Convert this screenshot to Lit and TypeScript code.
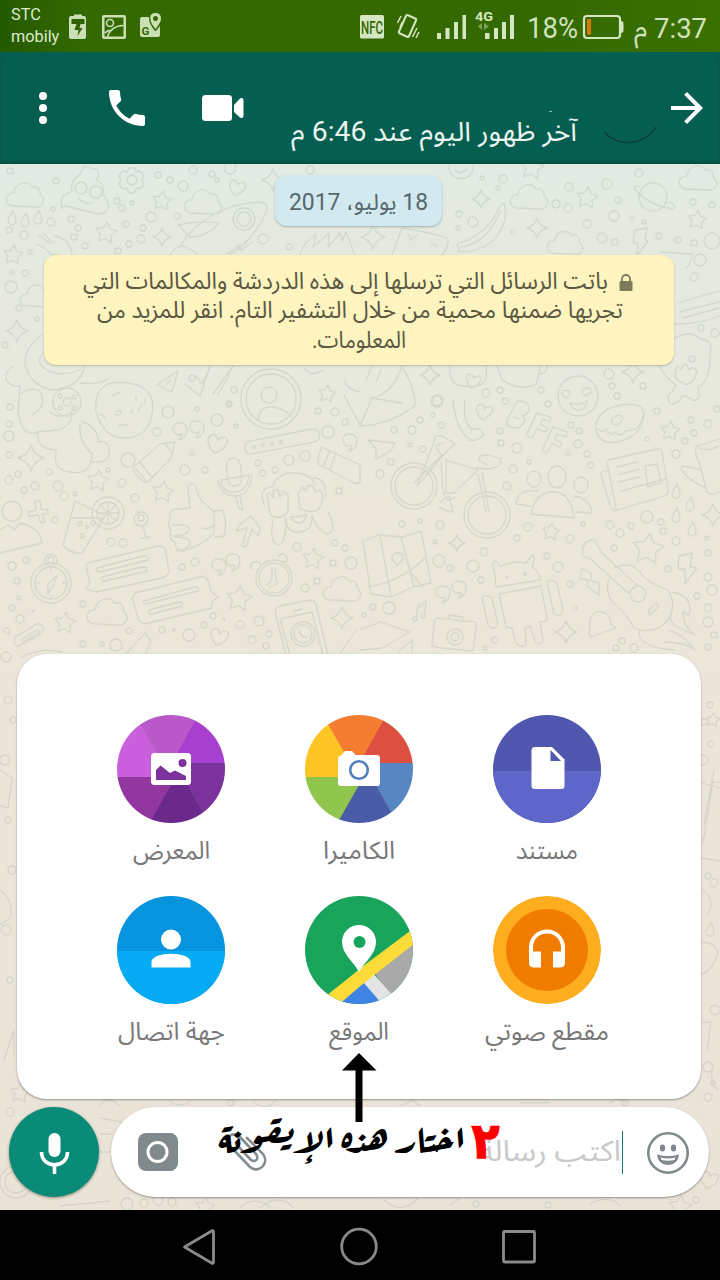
import { LitElement, html, svg, css } from "lit";
import { customElement } from "lit/decorators.js";

const ARABIC = '"Roboto", "Noto Sans Arabic", "Noto Sans", "Noto Naskh Arabic", "DejaVu Sans", sans-serif';

interface Line {
  text: string;
  w: number;
  h: number;
  base: number;
  size: number;
  fill: string;
  ltr?: boolean;
}

const line = (l: Line) => html`<svg class="line" width=${l.w} height=${l.h} viewBox="0 0 ${l.w} ${l.h}">
  <text x=${l.w / 2} y=${l.base} font-family=${ARABIC} font-size=${l.size} fill=${l.fill}
    text-anchor="middle" direction=${l.ltr ? "ltr" : "rtl"} textLength=${l.w} lengthAdjust="spacingAndGlyphs">${l.text}</text>
</svg>`;

/* ---- wallpaper doodles ---- */

const dots = `10,171,3 56,181,3 158,175,3 170,180,3 193,170,4 183,186,5 212,174,3 217,180,2 230,168,6 53,209,2 51,222,4 71,219,3 78,228,3
117,201,3 122,208,3 132,203,2 126,224,3 151,217,5 177,216,3 143,228,3 141,239,4 129,244,3 118,251,3 85,246,3 74,237,3 9,230,3 24,235,4
30,252,2 12,272,2 25,273,3 11,287,6 263,239,5 289,247,3 19,308,3 5,345,3 37,319,2 310,170,4 192,378,3 234,390,3 229,404,3
482,178,2 503,179,4 498,188,2 459,214,3 473,222,5 458,228,2 513,232,2 569,187,4 607,184,5 556,204,4 568,208,4 618,200,3 614,216,5
587,224,4 602,238,5 615,242,3 632,218,2 644,222,2 659,236,3 678,240,3 693,202,3 712,205,3 694,243,3 712,241,8 700,260,6 694,277,4
701,328,3 715,333,4 609,374,5 612,386,3 643,386,3 617,396,3 486,393,4 500,390,3 541,390,3 437,401,5 505,401,3 548,404,3 639,173,4
10,407,3 9,424,3 9,436,5 9,455,3 18,474,3 9,480,4 49,472,3 24,490,3 35,486,4 58,486,5 64,496,4 75,494,2 108,470,2 122,483,4 128,460,7
168,412,6 157,432,4 197,409,2 217,420,6 236,426,2 192,454,2 185,470,5 205,470,3 135,498,4 229,404,2 318,411,3 335,412,4 328,432,6
345,422,3 258,463,3 263,473,3 275,470,3 289,460,5 305,456,5 339,491,3 55,520,3 111,542,4 123,543,4 182,567,3 195,562,4 141,518,3
297,547,4 335,543,3 345,548,3 351,563,6 333,563,3 305,588,4 317,581,3 12,566,4 26,560,3 17,581,3 19,598,2 12,608,3 33,611,1 20,619,4
7,631,3 6,657,5 83,604,3 83,644,3 102,644,2 116,645,6 129,631,3 162,630,3 174,630,1 189,635,6 204,625,3 213,616,3 224,619,1 240,625,4
259,621,5 252,640,4 269,634,3 266,646,3 437,401,6 394,430,3 412,430,4 420,420,3 441,425,3 433,415,2 410,445,2 423,449,3 380,474,4
391,462,3 500,431,3 501,443,3 517,448,5 513,469,4 529,462,2 507,486,4 571,425,3 579,431,3 578,444,4 568,454,2 587,454,3 591,465,3
657,411,3 647,439,2 691,420,3 708,424,4 694,433,3 685,441,3 676,454,4 717,409,3 402,524,3 420,521,2 440,525,4 435,542,2 484,552,4
528,527,4 517,538,3 583,524,2 570,539,4 610,525,4 631,526,3 620,533,4 647,517,6 661,522,3 663,531,3 614,548,3 676,541,4 707,538,2
708,553,3 439,561,6 450,568,3 473,566,6 547,556,3 558,567,5 481,580,3 570,584,3 668,569,3 708,577,4 712,590,5 697,596,3 708,608,4
708,622,5 714,635,3 708,647,3 389,608,6 373,607,3 364,615,2 575,608,2 495,640,3 485,648,2 622,641,3 616,648,3 634,648,4 710,705,3
704,722,3 711,744,3 703,760,5 708,876,3 714,883,4 715,1010,5 708,1067,5 713,1083,2 708,1097,4 10,1112,4 8,700,4 13,720,3 5,760,5 8,820,3
12,870,4 6,930,5 10,980,3 127,1204,6 144,1203,4 158,1200,5 172,1202,4 476,1204,3 548,1205,3 696,1200,3 231,1103,3 625,1103,3`
  .split(/\s+/)
  .map((t) => t.split(",").map(Number));

const stars = [
  [106, 233, 11], [162, 201, 10], [13, 255, 10], [327, 394, 9], [532, 168, 12], [587, 198, 11], [697, 220, 10],
  [98, 481, 11], [163, 492, 11], [313, 559, 11], [239, 599, 13], [65, 623, 11], [670, 431, 10], [551, 532, 9],
  [648, 549, 16], [20, 1093, 10], [713, 720, 7], [205, 1207, 10], [680, 1207, 12],
];
const sparkles = [
  [162, 237, 9], [273, 180, 11], [17, 331, 11], [481, 199, 9], [537, 228, 10], [373, 237, 12], [633, 372, 11],
  [430, 375, 10], [31, 458, 13], [342, 618, 11], [457, 543, 8], [713, 515, 11], [566, 632, 11],
];
const clouds = [
  [25, 195, 1], [203, 202, 1], [529, 197, 1], [698, 178, 1], [565, 243, 0.95], [342, 589, 1], [107, 612, 1.08], [37, 296, 0.9],
];
const hearts = [[237, 188, 1], [217, 444, 1.2], [219, 637, 1.1], [484, 412, 1], [473, 381, 0.9], [709, 1180, 1.1]];
const quotes = [[180, 429], [197, 427], [219, 565], [233, 560], [443, 592], [459, 587], [350, 440]];
const drops = [[12, 217], [25, 219], [38, 216], [676, 490], [690, 503], [676, 514], [692, 528], [710, 928]];

const starPath = (cx: number, cy: number, r: number) => {
  let d = "";
  for (let i = 0; i < 10; i++) {
    const a = -Math.PI / 2 + 0.12 + (i * Math.PI) / 5;
    const k = i % 2 ? r * 0.52 : r;
    d += `${i ? "L" : "M"}${(cx + k * Math.cos(a)).toFixed(1)} ${(cy + k * Math.sin(a)).toFixed(1)}`;
  }
  return d + "Z";
};
const sparkPath = (x: number, y: number, r: number) => {
  const q = r * 0.22;
  return `M${x} ${y - r}Q${x + q} ${y - q} ${x + r} ${y}Q${x + q} ${y + q} ${x} ${y + r}Q${x - q} ${y + q} ${x - r} ${y}Q${x - q} ${y - q} ${x} ${y - r}Z`;
};

const wallpaper = html`<svg class="wall" viewBox="0 164 720 1046" width="720" height="1046" aria-hidden="true">
  <g fill="none" stroke-width="1.3" stroke-linejoin="round" stroke-linecap="round">
    ${dots.map(([x, y, r]) => svg`<circle cx=${x} cy=${y} r=${r}></circle>`)}
    ${stars.map(([x, y, r]) => svg`<path d=${starPath(x, y, r)}></path>`)}
    ${sparkles.map(([x, y, r]) => svg`<path d=${sparkPath(x, y, r)}></path>`)}
    ${clouds.map(([x, y, s]) => svg`<path transform="translate(${x} ${y}) scale(${s})" d="M-12 11C-22 10-20-3-11-2C-10-12 2-16 7-8C13-10 16-4 15-1C23 6 16 13 10 12Z"></path>`)}
    ${hearts.map(([x, y, s]) => svg`<path transform="translate(${x} ${y}) rotate(14) scale(${s})" d="M0 8C-6 4-9 0-8-4C-6-9-1-7 0-3C2-8 8-8 8-3C8 1 4 5 0 8Z"></path>`)}
    ${quotes.map(([x, y]) => svg`<path transform="translate(${x} ${y})" d="M0-6A6 6 0 1 0 2 5Q2 8-1 11Q7 9 7 0Q6-6 0-6Z"></path>`)}
    ${drops.map(([x, y]) => svg`<path transform="translate(${x} ${y})" d="M1-6Q-4 2-4 4A4 4 0 0 0 4 4Q4 1 1-6Z"></path>`)}
    <!-- gear, ice-cream face, rocket -->
    <circle cx="132" cy="180" r="5"></circle>
    <path d="M129 168h6l1 4 4-1 4 5-2 4 2 4-4 5-4-1-2 5h-5l-2-5-4 1-4-5 2-4-2-4 4-5 4 1Z"></path>
    <path d="M62 207C58 195 68 194 72 191C70 180 76 178 80 174L84 166L98 170Q100 177 96 180Q106 184 102 194Q112 204 107 210Q102 216 90 212L66 206Q60 210 62 207Z"></path>
    <circle cx="81" cy="188" r="6"></circle><circle cx="96" cy="192" r="6"></circle><path d="M78 198q8 8 16 4"></path>
    <path d="M180 247L187 236Q215 205 258 202Q270 202 266 213Q255 238 230 255"></path>
    <circle cx="244" cy="219" r="11"></circle><circle cx="244" cy="219" r="7"></circle>
    <path d="M178 225Q198 220 219 223L212 230Q200 238 190 237Z"></path>
    <path d="M38 235l12 8m-7-10l9 9m-15 2l9 5q6 8 12 5m-4-18q16 2 18 18"></path>
    <path d="M170 255q8-14 20-6t5 6M226 255l14-10 0 6 12-9M300 255q4-14 16-20l-3 12 16-14-1 14 12-14 2 8 4-9q6 14 8 22"></path>
    <!-- banana, planet, ticket, bolts -->
    <path d="M457 244Q488 235 500 206L504 203Q510 225 490 243Q474 254 459 251ZM461 247Q486 244 500 212"></path>
    <circle cx="653" cy="197" r="14"></circle><path d="M640 187Q630 184 637 192Q652 206 672 209Q678 207 670 202"></path>
    <path d="M392 255L402 228Q420 230 447 238Q451 244 442 255M408 234l4 6m6-5l-8 5M431 243l7 4"></path>
    <path d="M635 230l12-2-2 12 3 1-11 15 1-13-5 0ZM679 556l13-3-2 14 7 1-12 16 0-15-7 0ZM582 568l9 5 0 8 8 2 0 12-12-9 1-6-8-1Z"></path>
    <circle cx="461" cy="167" r="12"></circle><path d="M455 170q6 6 12-1"></path>
    <path d="M660 252l32 2q-2 12-6 14M678 303l41-12M679 312l40-10M683 318l36-10M675 324q25 0 44-8"></path>
    <!-- bear, mug, emoji, envelope -->
    <path d="M672 340Q690 328 700 339Q714 340 710 353Q710 384 698 387Q702 402 692 400Q682 392 680 400Q668 410 668 396Q674 390 676 385Q656 370 656 350"></path>
    <circle cx="692" cy="359" r="3"></circle><path d="M675 378q0-18 6-8q4-12 8 0q6-5 8 2q-4 14-13 12Z"></path>
    <path d="M450 366Q448 386 465 386Q490 390 486 366M497 366L502 380Q522 392 536 384Q540 374 540 366M538 374q9 0 9-8"></path>
    <circle cx="578" cy="396" r="20"></circle><path d="M570 403q9 3 17-2q-1 9-8 9t-9-7M563 396q-3-8 3-5q6-2 3 4l-2 3ZM582 393q-1-6 4-4q5-3 5 3l-5 4Z"></path>
    <path d="M401 366Q412 380 416 405Q390 425 360 426M360 426l12-28 30 5M402 366q-10 30-32 32M366 380l6-14m4 16l5-12"></path>
    <!-- astronaut and cookie -->
    <path d="M42 335Q25 345 25 365Q30 385 52 390Q80 388 85 366M44 352Q35 362 44 368Q56 378 80 370M14 366Q5 370 6 380Q12 388 20 386L18 412Q22 438 37 432L58 430Q72 426 72 412M22 393q8-6 18-2q8 16-8 24M37 432q0 18 20 18M56 452q-4 18 14 20q22 4 22-18Q78 440 80 425M92 462q20 2 17-14q-2-8-10-6Q96 425 82 422M80 383q18 2 28-4M50 412q10 8 22 0"></path>
    <circle cx="67" cy="402" r="14"></circle><circle cx="67" cy="402" r="4"></circle><circle cx="60" cy="396" r="2"></circle><circle cx="74" cy="397" r="2"></circle><circle cx="60" cy="408" r="2"></circle><circle cx="74" cy="408" r="2"></circle>
    <path d="M96 412Q94 390 108 384Q122 380 140 386Q156 394 152 414Q148 438 124 438Q104 438 96 412ZM112 396l8-4m-20 22l6 4m10-6q4-3 5 0t-5 3Zm14 1l3-3m5 1q5-7 4-8m-23 22h8M136 396v5m9-2v4"></path>
    <path d="M157 385L178 371L172 392ZM166 384l5-4M185 384L200 396L210 366M196 376l6 8 8-16M213 394l20-28M218 394l12-20"></path>
    <circle cx="271" cy="399" r="30"></circle><circle cx="271" cy="399" r="25"></circle><circle cx="269" cy="395" r="8"></circle><path d="M258 420q2-14 14-13t20 10"></path>
    <path d="M344 395l16 30M344 380q4 10 16 12M305 368q5 10 18 2"></path>
    <!-- pencil, ruler, marker, mic -->
    <path d="M175 442L171 458L148 482Q143 484 134 472Q132 468 136 465L160 444ZM140 463l12 14m-16-8l10 12M165 444l6 8"></path>
    <rect x="244" y="435" width="76" height="13" rx="6" transform="rotate(-11 282 441)"></rect>
    <circle cx="254" cy="447" r="1.5"></circle><circle cx="263" cy="445" r="1.5"></circle><circle cx="272" cy="444" r="1.5"></circle><circle cx="281" cy="442" r="1.5"></circle>
    <path d="M322 447l38 18v18l-6 0-34-18q-5-2 2-18M330 450l-6 15m12-12l-6 16"></path>
    <rect x="227" y="458" width="14" height="28" rx="7" transform="rotate(-6 234 472)"></rect>
    <path d="M218 481q4 16 18 15t16-21m-3 0q-1 16-14 17t-14-12ZM236 497l3 12h4l-3-12"></path>
    <!-- monkey, thumb, arrow -->
    <path d="M273 486Q278 472 295 473Q311 474 315 484M272 487q-14 0-8 18M313 478q15 0 12 20M285 514q0 18 12 18q16 0 15-16M291 517q8 0 16-2q-3 9-9 8t-7-6"></path>
    <path d="M268 500q-4-8 2-6l4 4-1-8 5 0 2 7 3-6 5 3 0 18q-10 10-18 2ZM298 494l4-7 4 4 2-6 5 1 2 6 5-2q6 6-2 20q-10 4-18-2ZM273 520q-4 22 5 25q8 0 8-26M312 516q8 18 16 18q10-4 0-22"></path>
    <path d="M190 508L188 486Q192 480 196 487Q198 498 206 505L214 512L214 534Q200 546 184 551Q176 552 175 542Q168 540 171 530Q167 526 170 520Q168 508 180 509ZM173 525q18-1 16 5q-2 6-16 6M176 537q14 0 14 6t-14 8M214 511l8-1q6 12 2 26l-9 1M214 525q-4 5-12 3"></path>
    <path d="M242 546L247 528L236 531L240 524L251 516L260 528L258 536L252 529L246 547Z"></path>
    <!-- cup and lemon, chess pin, person, plus -->
    <path d="M75 501L105 516L82 553Q70 554 63 545ZM71 518h32"></path><circle cx="108" cy="513" r="16"></circle><circle cx="108" cy="513" r="11"></circle>
    <path d="M108 502v22m-11-11h22m-19-8l16 16m0-16l-16 16"></path><circle cx="80" cy="524" r="2"></circle><circle cx="87" cy="527" r="1.5"></circle><circle cx="93" cy="523" r="2"></circle><circle cx="82" cy="536" r="2"></circle>
    <circle cx="141" cy="519" r="7"></circle><path d="M143 526l3 11m-5 1l9-1"></path>
    <circle cx="12" cy="511" r="10"></circle><path d="M0 530l8-5 7 5 5-7q20 4 22 20L0 553"></path>
    <path d="M35 501l5 0 1 8 7 1 0 4-6 0 3 8-4 1-3-8-9 1-1-4 8-2Z"></path>
    <!-- compass, chat bubbles, clock, phone -->
    <circle cx="51" cy="583" r="20"></circle><circle cx="51" cy="583" r="16"></circle><circle cx="51" cy="560" r="6"></circle><circle cx="51" cy="560" r="3"></circle>
    <path d="M57 576l-4 10-5 8 0-10Z M51 569v3m0 24v3m-14-16h3m23 0h3"></path>
    <path d="M88 563L158 546Q164 545 166 552L169 572Q168 576 162 578L96 592L86 589L90 582L86 567Q86 564 88 563ZM97 568l46-12q6 0 5 4l-48 12q-5 0-3-4ZM102 577l40-10q6 0 5 4l-42 10q-5 0-3-4Z"></path>
    <path d="M135 593L204 576L208 580L211 591L218 597L212 602L212 608L144 624L139 621L132 598ZM144 601l51-14q5 0 3 4l-52 13q-5 0-2-3ZM149 610l30-8q5 0 3 4l-30 8q-5 0-3-4Z"></path>
    <circle cx="274" cy="578" r="18"></circle><circle cx="274" cy="578" r="15"></circle><path d="M272 568v12l-5 5m8-17l2 16-8 3M252 569q-4-6 3-7t5 2M278 557q4-6 8-1t-2 6"></path>
    <path d="M286 655L275 612Q275 608 280 606L310 600Q315 600 316 605L328 655M290 655L280 619L312 612L323 655M294 611l8-2"></path>
    <circle cx="303" cy="634" r="12"></circle><circle cx="303" cy="634" r="9"></circle><path d="M299 630q2 8 8 7"></path>
    <path d="M15 637l22-13q5-1 6 4t-4 7l-20 11q-6 0-4-9m6 3l16-10q4 0 2 3l-16 9M125 655l20-22 6 8-6 14M22 657q18-10 40-5M339 655l18-26"></path>
    <!-- dart, handset, lettering, donut -->
    <path d="M368 440l27 3-4 8-15 8 0-10ZM453 400Q455 428 470 440Q478 442 484 434Q480 426 472 430Q462 420 465 400"></path>
    <path d="M517 401l-10 19q-2 6 6 8 10 0 11-6 2-4-2-6 8-2 7-9-1-6-12-6m-3 16l6 2M537 413l-11 22 6 3 5-9 8 3 3-4-8-4 3-5 7 3 1-5ZM553 427l-11 24 5 2 5-9 8 3 2-4-7-3 2-6 9 3 1-5Z"></path>
    <path d="M596 425Q598 410 620 405Q644 402 644 414Q642 438 616 442Q600 445 596 430M596 428q8 6 10 1 4 8 9 3 6 6 10-1 16 0 18-15"></path><ellipse cx="617" cy="420" rx="6" ry="4" transform="rotate(-30 617 420)"></ellipse>
    <!-- bicycle -->
    <circle cx="414" cy="486" r="23"></circle><circle cx="414" cy="486" r="19"></circle><circle cx="487" cy="515" r="23"></circle><circle cx="487" cy="515" r="19"></circle>
    <path d="M414 483L442 455L437 449Q434 445 443 443M434 442q0-8 9-6l12 8-10 9-28 33ZM446 460l32 10-24 23-8 0ZM441 462l2 30 4 8 8-2M478 474l8 38m-4-40l7 40M476 468l15 1 9-4 1-6-12-4-9 1-1 5 9 4M440 502l9-6 4 16-6-1-8-4"></path>
    <!-- group, newspaper, mug -->
    <ellipse cx="534" cy="479" rx="7" ry="8"></ellipse><ellipse cx="557" cy="477" rx="9" ry="11"></ellipse><ellipse cx="581" cy="485" rx="7" ry="8"></ellipse>
    <path d="M531 514q4-22 22-22t21 26ZM516 504q2-16 22-13M574 496q16 2 18 17l-16-1M516 504l14 2"></path>
    <path d="M608 460L657 449Q661 448 662 452L668 490Q668 495 664 496L618 510Q612 512 610 506L601 475Q601 470 607 471M607 462l9 47M617 467l20-5m-19 13l21-6m-20 13l21-5m-19 14l45-12M645 466l12-2 4 19-13 4Z"></path>
    <path d="M719 439l-22 7q-4 4 2 16l8 30q4 4 12 0M698 448q10 4 21-2M701 470q-26-8-18 2t23 16"></path>
    <!-- map, music, camera, robot -->
    <path d="M363 541L379 535L403 537L421 531L431 583L413 587L391 597L371 594ZM380 536l11 60m10-59l13 50M368 587q35-6 58-30M410 572l13 15M397 566l-5-7q0-6 6-6t5 6Z"></path>
    <path d="M416 618l2-13 8-4-1 13m-7-7l7-3"></path><circle cx="415" cy="619" r="2"></circle><circle cx="423" cy="616" r="2"></circle>
    <rect x="433" y="620" width="42" height="29" rx="3" transform="rotate(6 454 635)"></rect><circle cx="455" cy="637" r="8"></circle><circle cx="455" cy="637" r="4"></circle><path d="M449 618v-3l14 2v4"></path>
    <path d="M496 587L495 574Q491 562 495 561Q498 562 500 567Q512 560 526 563L532 555Q536 555 532 567Q540 572 540 580ZM499 594L541 586L547 618Q548 622 540 622L543 640Q540 646 536 643L530 626L525 628L526 645Q520 648 516 643L512 628L506 627Z"></path>
    <path d="M482 598q4-5 10 0l6 26q-4 8-10 1ZM547 582q6-4 10 2l6 26q-2 8-9 4Z"></path><circle cx="507" cy="577" r="1"></circle><circle cx="525" cy="574" r="1"></circle>
    <!-- guitar, bell, hand -->
    <path d="M583 556Q580 542 594 539L602 553L637 585L628 593L592 560ZM614 568Q630 560 640 572Q646 582 668 590Q680 610 662 626Q648 634 634 628Q626 612 612 602Q604 590 610 576"></path>
    <circle cx="638" cy="594" r="8"></circle><path d="M648 611l8-8 3 3-9 9ZM672 592q22 4 17 24l-6-5q0 16 12 24l-18-8q-10-5-5-18M640 630q-6 16 34 20M665 642q20 0 30 8-12-16-26-20"></path>
    <path d="M589 634L590 620Q593 610 602 612Q611 614 611 624L616 628 591 637ZM360 630l20-8 30 10-28 16-22 2M398 652l14-12v12"></path>
    <!-- strips around the panels -->
    <path d="M702 783l17 5M704 825l10-55M703 842l10-60 6 0M702 858l17 3M703 890q14 12 4 24M702 942q12 0 16 10-6 20-16 22M703 1022h8l-4 28M712 1068q-2 14 6 22M0 770l12 8-4 30-8-2M0 890q14 10 10 28L0 925M4 1060l10-30 0 26"></path>
    <path d="M100 1106q6-12 20 0M170 1101q10 8 20 0M255 1103q12 8 20-2M400 1106l12-6 8 6M520 1103h30M610 1103q8-8 16 0M100 1118l32 6M100 1134h12m-12 18h10M60 1206l50-5M240 1207q16-12 30 0M260 1208q18-16 34 0M384 1200q18 16 34-2M450 1205l10-7M590 1204q20-10 30 2"></path>
    <circle cx="16" cy="1182" r="16"></circle><circle cx="16" cy="1182" r="11"></circle>
  </g>
</svg>`;

/* ---- attachment options ---- */

const disc = (inner: unknown) => html`<svg class="disc" width="108" height="108" viewBox="-54 -54 108 108">
  <defs><clipPath id="c"><circle r="54"></circle></clipPath></defs><g clip-path="url(#c)">${inner}</g></svg>`;

const wheel = (c: string[]) => svg`
  <path fill=${c[0]} d="M-60-60H-39L-4 2V9H-60Z"></path>
  <path fill=${c[5]} d="M-60 8H6L-23 60H-60Z"></path>
  <path fill=${c[1]} d="M-39.500-60H32L0 0H-5.600Z"></path>
  <path fill=${c[2]} d="M30.500-60H60V-5H0L-1-3Z"></path>
  <path fill=${c[3]} d="M0-6H60V60H42L0-13Z"></path>
  <path fill=${c[4]} d="M0 16L8 0 42 60H-25Z"></path>`;

const options = [
  {
    label: "المعرض", w: 77,
    icon: disc(svg`${wheel(["#ca60dd", "#b958c9", "#a840cf", "#7c329c", "#6b298b", "#9236a0"])}
      <rect x="-20" y="-16" width="40" height="32" rx="3.500" fill="#fff"></rect>
      <path fill="#7c329c" d="M-15 11V1L-10.500-3.500-1 4 4 1.500 15 7V11Z"></path><circle cx="11.500" cy="-6" r="4" fill="#7c329c"></circle>`),
  },
  {
    label: "الكاميرا", w: 72,
    icon: disc(svg`${wheel(["#fcc425", "#f57d32", "#dd4f40", "#5886c2", "#4a5ba7", "#90c64d"])}
      <path fill="#fff" d="M-21-10Q-21-13-18-13.500L-14-18H-7L-3.500-14H18Q21-14 21-11V14Q21 17 18 17H-18Q-21 17-21 14Z"></path>
      <circle cy="1" r="8.800" fill="#fff" stroke="#5480bd" stroke-width="2.600"></circle>`),
  },
  {
    label: "مستند", w: 62,
    icon: disc(svg`<rect x="-54" y="-54" width="108" height="110" fill="#5157ae"></rect><rect x="-54" y="2" width="108" height="54" fill="#5e66ca"></rect>
      <path fill="#fff" d="M-12-22H5L17.500-9.500V17Q17.500 20 14.500 20H-12Q-15.500 20-15.500 17V-18.500Q-15.500-22-12-22Z"></path>
      <path fill="#5157ae" d="M3.500-19L14-8H3.500Z"></path>`),
  },
  {
    label: "جهة اتصال", w: 107,
    icon: disc(svg`<rect x="-54" y="-54" width="108" height="108" fill="#0794df"></rect><rect x="-54" y="1" width="108" height="54" fill="#07aaf4"></rect>
      <circle cy="-10.500" r="10" fill="#fff"></circle><path fill="#fff" d="M-19.500 17.500V12C-19.500 1 19.500 1 19.500 12V17.500Z"></path>`),
  },
  {
    label: "الموقع", w: 60,
    icon: disc(svg`<rect x="-54" y="-54" width="108" height="108" fill="#19a45c"></rect>
      <path fill="#a9a9a9" d="M56-8L15 22 38 56H56Z"></path><path fill="#3f84e5" d="M4 32L-22 53V60H22V48Z"></path>
      <path fill="#e4e4e4" d="M4 32L13 22 34 46 24 55Z"></path><path fill="#fddc3a" d="M55-22L7 14-33 46-22 56 5 33 55-6Z"></path>
      <path fill="#fff" d="M0 22C-6 11-17 4-17-8A16.800 16.800 0 0 1 17-8C17 4 7 10 0 22Z"></path><circle cx="0.500" cy="-8" r="6" fill="#19a45c"></circle>`),
  },
  {
    label: "مقطع صوتي", w: 124,
    icon: disc(svg`<circle r="54" fill="#fdad1e"></circle><circle r="41" fill="#f07c00"></circle>
      <path fill="#fff" d="M0-20.500C-10-20.500-18-12.500-18-2.500V12.500Q-18 17.500-13 17.500H-6V1.500H-14V-2.500C-14-10.500-8-16.500 0-16.500S14-10.500 14-2.500V1.500H6V17.500H13Q18 17.500 18 12.500V-2.500C18-12.500 10-20.500 0-20.500Z"></path>`),
  },
];

@customElement("app-root")
export class AppRoot extends LitElement {
  static styles = css`
    :host { display: flex; flex-direction: column; width: 720px; height: 1280px; overflow: hidden; position: relative; direction: ltr; }
    svg { display: block; flex: none; overflow: visible; }
    .status { height: 52px; display: flex; align-items: flex-start; background: linear-gradient(90deg, #265a00, #336900 12%, #336900 75%, #3b7000); box-sizing: border-box; padding-left: 11px; color: #dceccb; }
    .carrier { width: 58px; margin-top: 4px; font: 16.3px/22px "Roboto", sans-serif; }
    .bar { height: 112px; background: #055e4f; display: flex; align-items: flex-start; box-shadow: inset 0 -2px 2px rgba(0, 50, 38, .35), inset 0 2px 3px rgba(10, 105, 95, .3); box-sizing: border-box; }
    .chat { flex: 1; display: grid; background: linear-gradient(#e2ebe3 0, #e5e9df 100px, #e8e8de 240px, #ebe7da 340px, #ece6da 550px, #eae4d8 100%); }
    .wall { grid-area: 1 / 1; stroke: #a5b5a4; opacity: .3; overflow: hidden; }
    .column { grid-area: 1 / 1; display: flex; flex-direction: column; align-items: flex-start; position: relative; }
    .date { margin: 11px 0 0 275px; width: 167px; height: 51px; border-radius: 12px; background: #d2e9ef; box-shadow: 0 1px 2px rgba(70, 90, 90, .4); display: flex; justify-content: center; }
    .notice { margin: 29px 0 0 44px; width: 630px; height: 110px; border-radius: 12px; background: #fef4c0; box-shadow: 0 1px 2px rgba(90, 90, 60, .35); box-sizing: border-box; padding-top: 11px; }
    .row { display: flex; height: 30px; }
    .l1 { padding-left: 39px; gap: 11px; }
    .l2 { padding-left: 53px; }
    .l3 { padding-left: 268px; }
    .sheet { margin: auto 0 0 17px; width: 684px; height: 445px; background: #fff; border-radius: 30px; box-shadow: 0 1px 2px rgba(70, 60, 50, .5); box-sizing: border-box; padding: 61px 60px 0; display: grid; grid-template-columns: repeat(3, 188px); grid-template-rows: repeat(2, 181px); }
    .option { display: flex; flex-direction: column; align-items: center; }
    .compose { display: flex; margin: 8px 0 13px 9px; gap: 12px; }
    .mic { width: 90px; height: 90px; border-radius: 50%; background: #0a8b77; box-shadow: 0 1px 3px rgba(50, 40, 30, .5); }
    .pill { width: 598px; height: 90px; border-radius: 45px; background: #fff; box-shadow: 0 1px 2px rgba(70, 60, 50, .5); display: flex; }
    .clip { margin-left: 48px; }
    .hint { margin-left: 211px; }
    .caret { width: 1px; height: 43px; margin: 24px 23px 0 1px; background: #16776b; }
    .nav { height: 70px; background: #000; }
    .note { position: absolute; left: 0; top: 1040px; }
  `;

  render() {
    return html`
      <div class="status">
        <div class="carrier">STC<br />mobily</div>
        <svg width="290" height="52" viewBox="69 0 290 52">
          <g fill="#cbdfb5">
            <path d="M74 16v-1.500h8V16h2q2 0 2 2v19q0 2-2 2H71q-2 0-2-2V18q0-2 2-2Z"></path>
            <path fill="#2d6200" d="M71.500 19h13v5h-4l-1 4h3l-5 8 1-6h-4l2-6h-5Z"></path>
            <path d="M102 17q0-2 2-2h20q2 0 2 2v20q0 2-2 2h-20q-2 0-2-2ZM104.500 17.500v19h19v-19Z" fill-rule="evenodd"></path>
            <g fill="none" stroke="#cbdfb5" stroke-width="1.600"><circle cx="110" cy="23" r="3.500"></circle><path d="M107.500 37q3-11 16-11.500M104.500 33l5-3"></path></g>
            <path d="M142 17h8q0 7 5 13l5-5v10q0 2-2 2h-16q-2 0-2-2V19q0-2 2-2Z"></path>
            <path fill-rule="evenodd" d="M155.500 13q-5.500 0-5.500 5.500 0 4 5.500 10.500 5.500-6.500 5.500-10.500 0-5.500-5.500-5.500Zm0 3a2.500 2.500 0 1 1 0 5 2.500 2.500 0 1 1 0-5Z"></path>
            <path fill="none" stroke="#336900" stroke-width="1.200" d="M149.500 17q0 7 6 13.500 3-3 4.500-6"></path>
          </g>
          <text x="141.500" y="34.500" font-family="Roboto" font-weight="700" font-size="11.500" fill="#336900">G</text>
        </svg>
        <svg width="168" height="52" viewBox="359 0 168 52">
          <g fill="#d5e7c2">
            <rect x="360" y="15" width="24" height="23.500" rx="1.500"></rect>
            <text x="361" y="33.500" font-family="Roboto" font-weight="500" font-size="19" fill="#336900" textLength="22" lengthAdjust="spacingAndGlyphs">NFC</text>
            <g fill="none" stroke="#d5e7c2" stroke-width="2"><rect x="402" y="16" width="11" height="20" rx="1.500" transform="rotate(24 407.500 26)"></rect><path stroke-width="1.500" d="M397.500 23l3.500-7m-1 11l2.500-5M412.500 37l4.500-9m-1 10l3-6"></path></g>
            <path d="M437 33h4v6h-4zM445.500 28h4v11h-4zM454 22h4v17h-4zM462.500 15h3.500v24h-3.500z"></path>
            <path d="M485 33h4.500v6h-4.500zM494 28h4v11h-4zM502 22h4v17h-4zM510 15h4v24h-4z"></path>
            <text x="475" y="21" font-family="Roboto" font-weight="700" font-size="12.500" textLength="18" lengthAdjust="spacingAndGlyphs">4G</text>
            <path fill="#7fa258" d="M478 26.500l4-3.500v7zM489 26.500l-5-3.500v7z"></path>
          </g>
        </svg>
        ${line({ text: "18%", w: 51, h: 52, base: 38, size: 29, fill: "#d0e2bb", ltr: true })}
        <svg width="56" height="52" viewBox="578 0 56 52">
          <rect x="584" y="16" width="36" height="22" rx="3" fill="none" stroke="#d5e7c2" stroke-width="2.200"></rect>
          <path fill="#d5e7c2" d="M621 21q2.500 0 2.500 3v6q0 3-2.500 3Z"></path><rect x="587" y="19" width="4" height="15.500" fill="#d97a00"></rect>
        </svg>
        ${line({ text: "7:37 م", w: 73, h: 52, base: 37.5, size: 28, fill: "#d0e2bb" })}
      </div>

      <div class="bar">
        <svg width="291" height="112" viewBox="0 52 291 112" fill="#fff">
          <circle cx="43" cy="96" r="4"></circle><circle cx="43" cy="108" r="4"></circle><circle cx="43" cy="120" r="4"></circle>
          <path transform="translate(103 84) scale(2)" d="M6.620 10.790c1.440 2.830 3.760 5.140 6.590 6.590l2.200-2.200c.27-.27.67-.36 1.020-.24 1.120.37 2.330.57 3.570.57.55 0 1 .45 1 1V20c0 .55-.45 1-1 1-9.390 0-17-7.610-17-17 0-.55.45-1 1-1h3.500c.55 0 1 .45 1 1 0 1.250.2 2.450.57 3.570.11.35.03.74-.25 1.020l-2.200 2.200Z"></path>
          <rect x="202" y="95" width="30" height="26" rx="3.500"></rect><path d="M234 105L240 98.500Q243.500 97 243.500 101V115Q243.500 119 240 117.500L234 112Z"></path>
        </svg>
        ${line({ text: "آخر ظهور اليوم عند 6:46 م", w: 286, h: 112, base: 88.5, size: 27, fill: "#eaf5f1" })}
        <svg width="143" height="112" viewBox="577 52 143 112">
          <path d="M604 132A33 33 0 0 0 656 127" fill="none" stroke="#0a3a36" stroke-width="1.100"></path>
          <path d="M549 111.500h3" stroke="#8fb8ae" stroke-width="1"></path>
          <path transform="translate(663 84) scale(2)" fill="#fff" d="M12 4l-1.410 1.410L16.170 11H4v2h12.170l-5.580 5.590L12 20l8-8z"></path>
        </svg>
      </div>

      <div class="chat">
        ${wallpaper}
        <div class="column">
          <div class="date">${line({ text: "18 يوليو، 2017", w: 139, h: 51, base: 35, size: 23, fill: "#56686d" })}</div>
          <div class="notice">
            <div class="row l1">
              ${line({ text: "باتت الرسائل التي ترسلها إلى هذه الدردشة والمكالمات التي", w: 525, h: 30, base: 22.5, size: 23.5, fill: "#5a5842" })}
              <svg width="14" height="30" viewBox="0 0 14 30"><rect x="0.500" y="15" width="13" height="10" rx="1.500" fill="#7d7a5c"></rect><path d="M3 15v-2a4 4 0 0 1 8 0v2" fill="none" stroke="#7d7a5c" stroke-width="1.800"></path></svg>
            </div>
            <div class="row l2">${line({ text: "تجريها ضمنها محمية من خلال التشفير التام. انقر للمزيد من", w: 526, h: 30, base: 22, size: 23.5, fill: "#5a5842" })}</div>
            <div class="row l3">${line({ text: "المعلومات.", w: 94, h: 30, base: 21.5, size: 23.5, fill: "#5a5842" })}</div>
          </div>
          <div class="sheet">
            ${options.map((o) => html`<div class="option">${o.icon}${line({ text: o.label, w: o.w, h: 50, base: 36, size: 24.5, fill: "#777" })}</div>`)}
          </div>
          <div class="compose">
            <div class="mic"><svg width="90" height="90" viewBox="0 0 90 90"><rect x="39.500" y="26" width="12" height="24" rx="6" fill="#fff"></rect><path d="M32.500 45c0 17 26 17 26 0M45.500 58v9" fill="none" stroke="#fff" stroke-width="3.600"></path></svg></div>
            <div class="pill">
              <svg width="67" height="90" viewBox="0 0 67 90"><rect x="27" y="26" width="40" height="38" rx="8" fill="#80898b"></rect><circle cx="46.500" cy="45" r="9.500" fill="none" stroke="#fff" stroke-width="3"></circle></svg>
              <svg class="clip" width="42" height="90" viewBox="226 1107 42 90" fill="none" stroke="#848d90" stroke-width="2.600" stroke-linecap="round"><path d="M247 1138L263 1154C270 1164 258 1174 250 1167L230 1146C223 1138 233 1130 240 1137L256 1154C260 1160 254 1163 250 1159L237 1145"></path></svg>
              <div class="hint">${line({ text: "اكتب رسالة", w: 142, h: 90, base: 54, size: 29, fill: "#c9c9c9" })}</div>
              <div class="caret"></div>
              <svg width="42" height="90" viewBox="0 0 42 90"><circle cx="22" cy="46" r="19.700" fill="none" stroke="#7f898b" stroke-width="2.600"></circle><ellipse cx="16.500" cy="41" rx="2.700" ry="3.600" fill="#7f898b"></ellipse><ellipse cx="27.500" cy="41" rx="2.700" ry="3.600" fill="#7f898b"></ellipse><path d="M11 47.500Q22 50.500 33 47.500Q32 58 22 58T11 47.500Z" fill="#7f898b"></path><path d="M14.500 50.500Q22 52.500 29.500 50.500L28.500 53Q22 54.500 15.500 53Z" fill="#fff"></path></svg>
            </div>
          </div>
        </div>
      </div>

      <div class="nav">
        <svg width="720" height="70" viewBox="0 1210 720 70" fill="none" stroke="#8a8a8a" stroke-width="2.800" stroke-linejoin="round">
          <path d="M184.500 1247L212.500 1230.500 213.500 1231.500V1262.500L212.500 1263.500Z"></path><circle cx="359" cy="1246.500" r="17.300"></circle><rect x="503.500" y="1231.500" width="31" height="30.500" rx="1"></rect>
        </svg>
      </div>

      <svg class="note" width="720" height="140" viewBox="0 1040 720 140">
        <path d="M359 1053L376.500 1070.500H362.500V1122H355.500V1070.500H342Z"></path>
        <text x="342.500" y="1153" direction="rtl" text-anchor="middle" font-family='"Aref Ruqaa", "Noto Naskh Arabic", "Noto Sans Arabic", "DejaVu Sans", sans-serif' font-weight="700" font-size="37" textLength="247" lengthAdjust="spacingAndGlyphs">اختار هذه الإيقونة</text>
        <text x="485.500" y="1158" direction="rtl" text-anchor="middle" fill="#f00" stroke="#f00" stroke-width="1.500" font-family='"DejaVu Sans", sans-serif' font-weight="700" font-size="50" textLength="28" lengthAdjust="spacingAndGlyphs">٢</text>
      </svg>
    `;
  }
}
